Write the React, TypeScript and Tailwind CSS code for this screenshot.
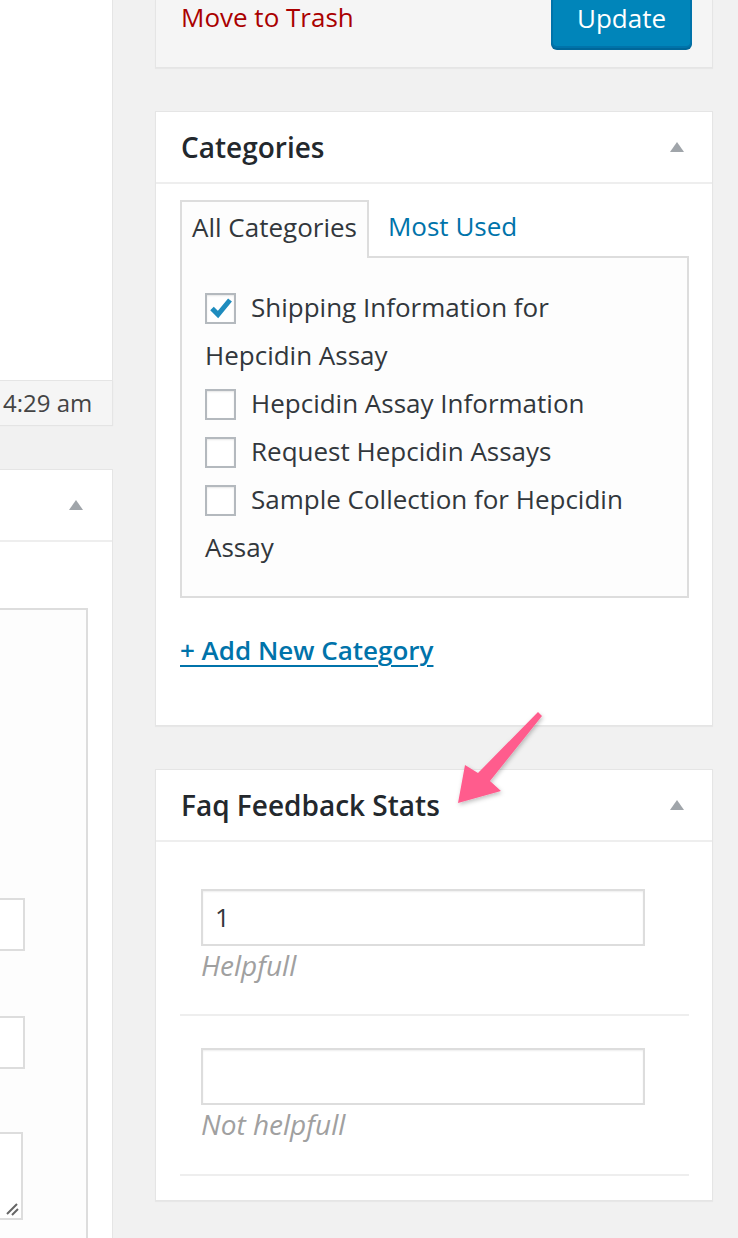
import React from "react";

const categories = [
  { label: "Shipping Information for Hepcidin Assay", checked: true },
  { label: "Hepcidin Assay Information", checked: false },
  { label: "Request Hepcidin Assays", checked: false },
  { label: "Sample Collection for Hepcidin Assay", checked: false },
];

const stats = [
  { value: "1", label: "Helpfull" },
  { value: "", label: "Not helpfull" },
];

function Toggle() {
  return (
    <svg width="14" height="10" viewBox="0 0 14 10">
      <polygon points="7,0 14,10 0,10" fill="#a0a5aa" />
    </svg>
  );
}

function Checkbox({ checked }: { checked: boolean }) {
  return (
    <span className="inline-flex items-center justify-center w-[31px] h-[31px] border-2 border-[#b4b9be] bg-white shadow-[inset_0_1px_2px_rgba(0,0,0,0.1)] align-middle mr-[15px] -mt-[4px]">
      {checked && (
        <svg width="24" height="22" viewBox="0 0 24 22">
          <path d="M3 11.5 L9 17.5 L21 3" fill="none" stroke="#1e8cbe" strokeWidth="5" strokeLinejoin="miter" />
        </svg>
      )}
    </span>
  );
}

function BoxHeader({ title }: { title: string }) {
  return (
    <div className="h-[72px] border-b-2 border-[#eeeeee] flex items-center justify-between pl-[25px] pr-[28px]">
      <h2 className="text-[28px] font-semibold text-[#23282d] leading-none">{title}</h2>
      <Toggle />
    </div>
  );
}

export default function App() {
  return (
    <div className="relative w-[738px] h-[1238px] overflow-hidden bg-[#f1f1f1] flex font-['Open_Sans',sans-serif]">
      {/* left column, mostly cut off */}
      <div className="w-[113px] flex flex-col shrink-0">
        <div className="h-[380px] bg-white border-r border-[#e5e5e5]" />
        <div className="h-[45px] bg-[#f5f5f5] border-t border-[#e5e5e5] border-r flex items-center pl-[3px] text-[24px] text-[#444] shadow-[0_1px_1px_rgba(0,0,0,0.05)]">
          4:29 am
        </div>
        <div className="h-[44px]" />
        <div className="flex-1 bg-white border-t border-r border-[#e5e5e5] flex flex-col">
          <div className="h-[72px] border-b-2 border-[#eeeeee] flex items-center justify-end pr-[29px]">
            <Toggle />
          </div>
          <div className="pt-[66px] flex-1 flex flex-col">
            <div className="flex-1 w-[88px] bg-[#fdfdfd] border-t-2 border-r-2 border-[#dddddd] flex flex-col">
              <div className="mt-[288px] w-[25px] h-[53px] bg-white border-2 border-l-0 border-[#dddddd]" />
              <div className="mt-[65px] w-[25px] h-[53px] bg-white border-2 border-l-0 border-[#dddddd]" />
              <div className="mt-[63px] w-[23px] h-[88px] bg-white border-2 border-l-0 border-[#dddddd] flex items-end justify-end p-[2px]">
                <svg width="14" height="14" viewBox="0 0 14 14">
                  <path d="M2 12 L12 2 M7 13 L13 7" stroke="#666" strokeWidth="2" />
                </svg>
              </div>
            </div>
          </div>
        </div>
      </div>

      {/* right sidebar */}
      <div className="ml-[42px] w-[558px] flex flex-col">
        {/* publish actions */}
        <div className="h-[68px] bg-[#f5f5f5] border-x border-b border-[#e5e5e5] shadow-[0_1px_1px_rgba(0,0,0,0.04)] pl-[25px] pr-[20px]">
          <div className="flex items-start justify-between">
            <a className="text-[26px] leading-[34px] text-[#a00]">Move to Trash</a>
            <button className="-mt-[10px] w-[141px] h-[58px] rounded-[6px] bg-[#0085ba] border-2 border-[#0073aa] shadow-[0_2px_0_#006799] text-white text-[26px] pb-[2px]">
              Update
            </button>
          </div>
        </div>

        {/* categories */}
        <div className="mt-[43px] h-[615px] bg-white border border-[#e5e5e5] shadow-[0_1px_1px_rgba(0,0,0,0.04)] flex flex-col">
          <BoxHeader title="Categories" />
          <div className="pt-[16px] pl-[24px] pr-[23px]">
            <div className="flex items-end h-[56px]">
              <div className="relative z-10 -mb-[2px] h-[58px] border-2 border-b-0 border-[#dddddd] bg-[#fdfdfd] px-[10px] pb-[6px] flex items-center text-[26px] text-[#32373c]">
                All Categories
              </div>
              <a className="ml-[19px] h-[56px] pb-[4px] flex items-center text-[26px] text-[#0073aa]">Most Used</a>
            </div>
            <div className="h-[342px] border-2 border-[#dddddd] bg-[#fdfdfd] pt-[25px] pl-[23px] pr-[40px]">
              <ul>
                {categories.map((c) => (
                  <li key={c.label} className="text-[26px] leading-[48px] text-[#32373c]">
                    <Checkbox checked={c.checked} />
                    {c.label}
                  </li>
                ))}
              </ul>
            </div>
            <a className="block mt-[32px] text-[26px] leading-[40px] font-semibold text-[#0073aa] underline decoration-2 underline-offset-[5px]">
              + Add New Category
            </a>
          </div>
        </div>

        {/* faq feedback stats */}
        <div className="mt-[43px] bg-white border border-[#e5e5e5] shadow-[0_1px_1px_rgba(0,0,0,0.04)] flex flex-col">
          <BoxHeader title="Faq Feedback Stats" />
          <div className="pt-[14px] pb-[24px] pl-[24px] pr-[23px]">
            {stats.map((s, i) => (
              <div
                key={s.label}
                className={`${i === 0 ? "pt-[33px] pb-[29px]" : "pt-[32px] pb-[30px]"} pl-[21px] border-b-2 border-[#eeeeee]`}
              >
                <div className="w-[444px] h-[57px] border-2 border-[#dddddd] bg-white shadow-[inset_0_1px_2px_rgba(0,0,0,0.07)] flex items-center pl-[12px] text-[26px] text-[#32373c]">
                  {s.value}
                </div>
                <p className="-mt-[1px] text-[28px] leading-[40px] italic text-[#a0a0a0]">{s.label}</p>
              </div>
            ))}
          </div>
        </div>
      </div>

      {/* annotation arrow */}
      <svg className="absolute inset-0 pointer-events-none" width="738" height="1238" viewBox="0 0 738 1238">
        <defs>
          <filter id="arrowShadow" x="-20%" y="-20%" width="140%" height="140%">
            <feDropShadow dx="1" dy="2" stdDeviation="2" floodColor="#000" floodOpacity="0.25" />
          </filter>
        </defs>
        <polygon
          points="538,712 542,716 490,781 501,791 458,803 465,765 478,773"
          fill="#ff5c8d"
          filter="url(#arrowShadow)"
        />
      </svg>
    </div>
  );
}
